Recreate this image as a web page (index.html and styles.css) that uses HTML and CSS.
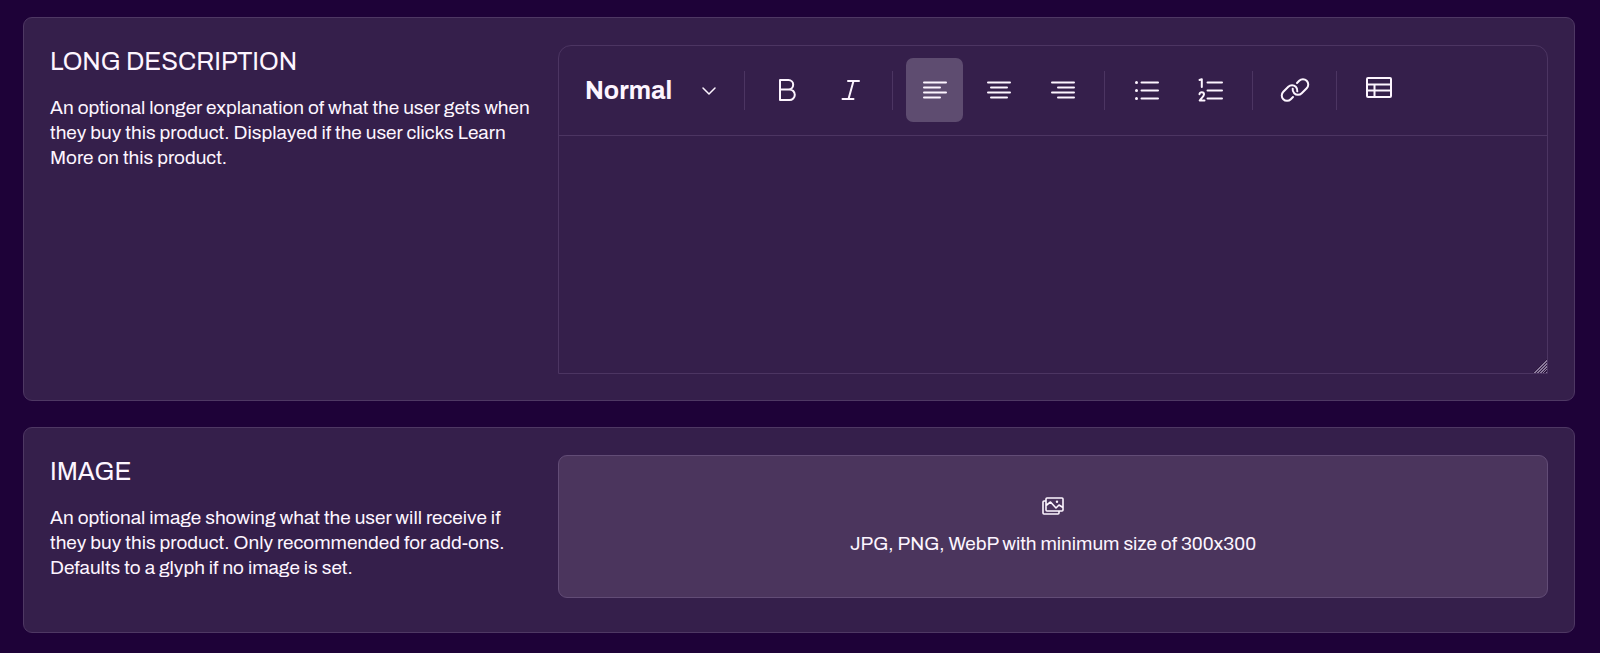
FILE: index.html
```html
<!DOCTYPE html>
<html lang="en">
<head>
    <meta charset="UTF-8">
    <meta name="viewport" content="width=device-width, initial-scale=1.0">
    <title>Edit Product</title>
    <link rel="stylesheet" href="styles.css">
</head>
<body>

    <form class="product-form">
        <section class="card">
            <div class="info">
                <h2><label for="description">LONG DESCRIPTION</label></h2>
                <p>An optional longer explanation of what the user gets when they buy this product. Displayed if the user clicks Learn More on this product.</p>
            </div>

            <div class="editor">
                <div class="toolbar">
                    <div class="format">
                        <select class="format-select" aria-label="Text style">
                            <option>Normal</option>
                            <option>Heading 1</option>
                            <option>Heading 2</option>
                        </select>
                        <svg class="chevron" width="14" height="8" viewBox="0 0 14 8"><path d="M1 1l6 6 6-6"/></svg>
                    </div>
                    <span class="separator"></span>
                    <button type="button" class="tool" aria-label="Bold">
                        <svg width="28" height="28" viewBox="0 0 28 28"><path d="M7 4h8.500a4.700 4.700 0 0 1 0 9.400H7zM7 13.400h9.500a5.300 5.300 0 0 1 0 10.600H7z"/></svg>
                    </button>
                    <button type="button" class="tool" aria-label="Italic">
                        <svg width="28" height="28" viewBox="0 0 28 28"><path d="M11 5h11M5.500 23h11M16.500 5l-5 18"/></svg>
                    </button>
                    <span class="separator"></span>
                    <button type="button" class="tool active" aria-label="Align left">
                        <svg width="28" height="28" viewBox="0 0 28 28"><path d="M3 6.500h22M3 11.500h16M3 16.500h22M3 21.500h16"/></svg>
                    </button>
                    <button type="button" class="tool" aria-label="Align center">
                        <svg width="28" height="28" viewBox="0 0 28 28"><path d="M3 6.500h22M6 11.500h16M3 16.500h22M6 21.500h16"/></svg>
                    </button>
                    <button type="button" class="tool" aria-label="Align right">
                        <svg width="28" height="28" viewBox="0 0 28 28"><path d="M3 6.500h22M9 11.500h16M3 16.500h22M9 21.500h16"/></svg>
                    </button>
                    <span class="separator"></span>
                    <button type="button" class="tool" aria-label="Bulleted list">
                        <svg width="28" height="28" viewBox="0 0 28 28"><path d="M8.500 6.500H25M8.500 14.500H25M8.500 22.500H25"/><g class="dots"><circle cx="3.500" cy="6.500" r="1.500"/><circle cx="3.500" cy="14.500" r="1.500"/><circle cx="3.500" cy="22.500" r="1.500"/></g></svg>
                    </button>
                    <button type="button" class="tool" aria-label="Numbered list">
                        <svg width="28" height="28" viewBox="0 0 28 28"><path d="M10.500 6.500H25M10.500 14.500H25M10.500 22.500H25M2.500 4l2.300-.8V11M2.500 18.300c0-2.800 4.500-2.700 4.500 0 0 2-2.500 3.500-4.300 6.200H7.500"/></svg>
                    </button>
                    <span class="separator"></span>
                    <button type="button" class="tool" aria-label="Link">
                        <svg width="28" height="28" viewBox="0 0 28 28"><path d="M16 7l2.200-2.300a5.300 5.300 0 0 1 7.500 0a5.300 5.300 0 0 1 0 7.500l-5 5a5.300 5.300 0 0 1-7.500 0a5.300 5.300 0 0 1-1.500-4.500M12 21l-2.200 2.300a5.300 5.300 0 0 1-7.500 0a5.300 5.300 0 0 1 0-7.500l5-5a5.300 5.300 0 0 1 7.500 0a5.300 5.300 0 0 1 1.500 4.500"/></svg>
                    </button>
                    <span class="separator"></span>
                    <button type="button" class="tool" aria-label="Table">
                        <svg width="28" height="28" viewBox="0 0 28 28"><path d="M3 2h22q1 0 1 1v17q0 1-1 1H3q-1 0-1-1V3q0-1 1-1zM2 8.500h24M2 14.500h24M9.500 8.500V21"/></svg>
                    </button>
                </div>
                <textarea id="description" name="description"></textarea>
            </div>
        </section>

        <section class="card">
            <div class="info">
                <h2>IMAGE</h2>
                <p>An optional image showing what the user will receive if they buy this product. Only recommended for add-ons. Defaults to a glyph if no image is set.</p>
            </div>

            <label class="upload" for="image">
                <input type="file" id="image" name="image" accept=".jpg,.png,.webp">
                <svg class="gallery" width="22" height="18" viewBox="0 0 22 18"><path d="M5 1h15q1 0 1 1v11q0 1-1 1H5q-1 0-1-1V2q0-1 1-1zM4 4H2q-1 0-1 1v11q0 1 1 1h14q1 0 1-1v-2M4 8.500l4.500-3.500 5.500 6 3-3 4 2.500"/><circle class="dots" cx="15" cy="4.800" r="1.200"/></svg>
                <span>JPG, PNG, WebP with minimum size of 300x300</span>
            </label>
        </section>
    </form>

</body>
</html>
```
FILE: styles.css
```css
* {
    box-sizing: border-box;
}

body {
    font-family: Archivo, "Liberation Sans", Arial, sans-serif;
    font-size: 19px;
    line-height: 25px;
    margin: 0;
    padding: 17px 25px 20px 23px;
    background-color: #1e0238;
    color: #fdf5ff;
}

.product-form {
    display: flex;
    flex-direction: column;
    gap: 26px;
}

.card {
    display: grid;
    grid-template-columns: 1fr 2fr;
    gap: 13px;
    padding: 27px 26px 26px;
    border: 1px solid #4e3863;
    border-radius: 9px;
    background-color: #351f4b;
}

.info {
    padding-right: 12px;
}

h2 {
    font-size: 25px;
    font-weight: normal;
    line-height: 34px;
    margin: 0 0 16px;
}

p {
    margin: 0;
}

.editor {
    border: 1px solid #4c3562;
    border-radius: 13px 13px 0 0;
}

.toolbar {
    display: flex;
    align-items: center;
    gap: 7px;
    height: 90px;
    padding: 0 26px;
    border-bottom: 1px solid #4c3562;
}

.format {
    position: relative;
}

.format-select {
    appearance: none;
    width: 132px;
    padding: 0;
    border: none;
    background: none;
    color: inherit;
    font: bold 25px/34px Archivo, "Liberation Sans", Arial, sans-serif;
    cursor: pointer;
}

svg {
    fill: none;
    stroke: currentColor;
    stroke-width: 2;
    stroke-linecap: round;
    stroke-linejoin: round;
    overflow: visible;
}

.chevron {
    position: absolute;
    right: 1px;
    top: 13px;
    stroke-width: 1.5;
    pointer-events: none;
}

.gallery {
    stroke-width: 1.6;
}

.dots {
    fill: currentColor;
    stroke: none;
}

.separator {
    width: 1px;
    height: 39px;
    margin: 0 6px;
    background-color: #4c3562;
}

.format + .separator {
    margin-left: 20px;
}

.tool {
    display: flex;
    align-items: center;
    justify-content: center;
    width: 57px;
    height: 64px;
    margin-bottom: 2px;
    padding: 0;
    border: none;
    border-radius: 7px;
    background: none;
    color: inherit;
    cursor: pointer;
}

.tool.active,
.tool:hover {
    background-color: #5e4c70;
}

textarea {
    display: block;
    width: 100%;
    height: 237px;
    padding: 16px 26px;
    border: none;
    background: none;
    color: inherit;
    font: inherit;
    resize: vertical;
}

/* diagonal grip lines in the lower right corner */
textarea::-webkit-resizer {
    background:
        linear-gradient(135deg, #351f4b 50%, transparent 50%),
        repeating-linear-gradient(135deg, #8b7a9b 0 1px, #2c173f 1px 2px);
}

.upload {
    position: relative;
    display: flex;
    flex-direction: column;
    align-items: center;
    justify-content: center;
    gap: 16px;
    height: 143px;
    margin-bottom: 8px;
    border: 1px solid #624c76;
    border-radius: 9px;
    background-color: #4b355d;
    cursor: pointer;
}

.upload input {
    position: absolute;
    inset: 0;
    opacity: 0;
    cursor: pointer;
}
```
